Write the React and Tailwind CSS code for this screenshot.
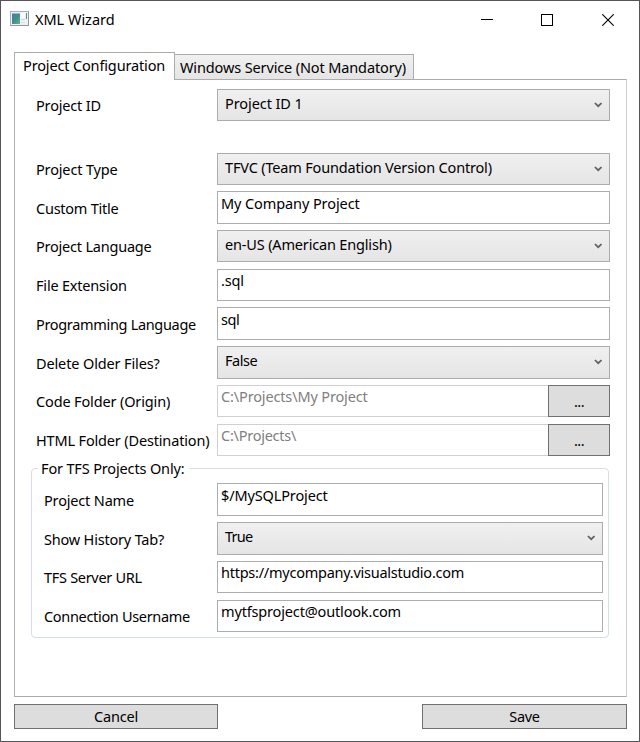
function AppIcon() {
  return (
    <svg width="19" height="15" viewBox="0 0 19 15" className="shrink-0">
      <defs>
        <linearGradient id="pane" x1="0" y1="0" x2="1" y2="1">
          <stop offset="0" stopColor="#4a78b4" />
          <stop offset="0.5" stopColor="#3f8f8c" />
          <stop offset="1" stopColor="#62b488" />
        </linearGradient>
      </defs>
      <rect x="0.5" y="0.5" width="18" height="14" fill="#eef0f3" stroke="#8f979f" />
      <path d="M0.5 14.5V0.5H18.5" fill="none" stroke="#a9b1bb" />
      <rect x="2" y="2.5" width="8" height="10.5" fill="url(#pane)" />
      <rect x="11" y="2" width="4" height="5" fill="#f8f9fa" />
      <rect x="11" y="8" width="4" height="1" fill="#d2d6da" />
      <rect x="11" y="11" width="4" height="1" fill="#dde0e4" />
      <rect x="16" y="2" width="1" height="6" fill="#4f9a86" />
    </svg>
  );
}

function Chevron() {
  return (
    <svg width="8" height="6" viewBox="0 0 8 6" className="mt-[9px] shrink-0">
      <path d="M0.9 1L4.2 4.2L7.5 1" fill="none" stroke="#606060" strokeWidth="1.7" />
    </svg>
  );
}

function Row({ height, label, tracking, offset = "pt-[6px]", labelWidth = "w-[181px]", children }) {
  return (
    <div className={`flex items-start ${height}`}>
      <div className={`shrink-0 ${labelWidth} ${offset} ${tracking}`}>{label}</div>
      {children}
    </div>
  );
}

function Combo({ height = "h-8", chevronPad = "pr-[7px]", tracking, children }) {
  return (
    <div
      className={`flex flex-1 justify-between border border-[#acacac] bg-linear-to-b from-[#f0f0f0] to-[#e5e5e5] pl-[7px] pt-[3px] ${height} ${chevronPad}`}
    >
      <span className={tracking}>{children}</span>
      <Chevron />
    </div>
  );
}

function Field({ height = "h-8", pad = "pt-0", tone = "border-[#abadb3]", tracking, children }) {
  return (
    <div className={`flex-1 border bg-white pl-[3px] ${height} ${pad} ${tone}`}>
      <div className={tracking}>{children}</div>
    </div>
  );
}

function Browse() {
  return (
    <button className="flex h-8 w-[62px] shrink-0 justify-center border border-[#707070] bg-[#dddddd] pt-[5px] tracking-[-0.6px]">
      ...
    </button>
  );
}

export default function App() {
  return (
    <div className="flex h-[742px] w-[640px] flex-col border border-[#555557] bg-white font-['Noto_Sans',sans-serif] text-[14.5px] leading-5 whitespace-nowrap text-black">
      <header className="flex h-[51px] shrink-0 items-start pl-[9px]">
        <div className="pt-[10px]">
          <AppIcon />
        </div>
        <h1 className="pt-[8px] pl-[6px] tracking-[-0.02px]">XML Wizard</h1>
        <svg width="12" height="12" viewBox="0 0 12 12" className="mt-[13px] mr-12 ml-auto">
          <path d="M0 5.5H12" stroke="#000" />
        </svg>
        <svg width="12" height="12" viewBox="0 0 12 12" className="mt-[13px] mr-[49px]">
          <rect x="0.5" y="0.5" width="11" height="11" fill="none" stroke="#000" />
        </svg>
        <svg width="12" height="12" viewBox="0 0 12 12" className="mt-[13px] mr-[25px]">
          <path d="M0.3 0.3L11.7 11.7M11.7 0.3L0.3 11.7" stroke="#000" strokeWidth="1.1" />
        </svg>
      </header>

      <nav className="z-10 ml-[13px] flex h-[28px] shrink-0 items-end">
        <div className="h-[28px] w-[161px] border border-b-0 border-[#acacac] bg-white pt-[2px] pl-[8px] tracking-[-0.146px]">
          Project Configuration
        </div>
        <div className="mb-px h-[25px] w-[239px] border border-b-0 border-l-0 border-[#acacac] bg-linear-to-b from-[#f0f0f0] to-[#e5e5e5] pt-[2px] pl-[5px] tracking-[-0.13px]">
          Windows Service (Not Mandatory)
        </div>
      </nav>

      <main className="mx-[13px] -mt-px mr-[12px] h-[618px] shrink-0 border border-[#acacac] border-r-[#d0d0d0] bg-white pt-[9px]">
        <section className="pr-[16px] pl-[21px]">
          <Row height="h-16" label="Project ID" tracking="tracking-[-0.17px]">
            <Combo tracking="tracking-[-0.08px]">Project ID 1</Combo>
          </Row>
          <Row height="h-[38px]" label="Project Type" tracking="tracking-[-0.156px]">
            <Combo tracking="tracking-[-0.17px]">TFVC (Team Foundation Version Control)</Combo>
          </Row>
          <Row height="h-[39px]" label="Custom Title" tracking="tracking-[-0.244px]" offset="pt-[7px]">
            <Field height="h-[33px]" pad="pt-px" tracking="tracking-[-0.095px]">My Company Project</Field>
          </Row>
          <Row height="h-[39px]" label="Project Language" tracking="tracking-[-0.217px]">
            <Combo tracking="tracking-[-0.168px]">en-US (American English)</Combo>
          </Row>
          <Row height="h-[38px]" label="File Extension" tracking="tracking-[-0.194px]">
            <Field tracking="tracking-[-0.2px]">.sql</Field>
          </Row>
          <Row height="h-[39px]" label="Programming Language" tracking="tracking-[-0.322px]" offset="pt-[7px]">
            <Field height="h-[33px]" pad="pt-px" tracking="tracking-[-0.43px]">sql</Field>
          </Row>
          <Row height="h-[39px]" label="Delete Older Files?" tracking="tracking-[-0.13px]" offset="pt-[7px]">
            <Combo height="h-[33px]" tracking="tracking-[-0.46px]">False</Combo>
          </Row>
          <Row height="h-[39px]" label="Code Folder (Origin)" tracking="tracking-[-0.143px]">
            <Field tone="border-[#cfd0d3] border-r-0 text-[#808080]" tracking="tracking-[-0.147px]">
              {"C:\\Projects\\My Project"}
            </Field>
            <Browse />
          </Row>
          <Row height="h-[34px]" label="HTML Folder (Destination)" tracking="tracking-[-0.16px]">
            <Field tone="border-[#cfd0d3] border-r-0 text-[#808080]" tracking="tracking-[-0.25px]">
              {"C:\\Projects\\"}
            </Field>
            <Browse />
          </Row>
        </section>

        <fieldset className="mr-[17px] ml-[16px] h-[180px] rounded-[4px] border border-[#d5dfe5] pr-[5px] pl-[12px]">
          <legend className="-ml-[6px] h-5 pr-[5px] pl-[3px] leading-5 tracking-[-0.15px]">
            For TFS Projects Only:
          </legend>
          <div className="pt-[5px]">
            <Row height="h-[39px]" labelWidth="w-[173px]" label="Project Name" tracking="tracking-[-0.167px]" offset="pt-[7px]">
              <Field height="h-[33px]" pad="pt-px" tracking="tracking-[-0.134px]">$/MySQLProject</Field>
            </Row>
            <Row height="h-[39px]" labelWidth="w-[173px]" label="Show History Tab?" tracking="tracking-[-0.195px]" offset="pt-[7px]">
              <Combo height="h-[33px]" chevronPad="pr-[7px]" tracking="tracking-[-0.76px]">True</Combo>
            </Row>
            <Row height="h-[39px]" labelWidth="w-[173px]" label="TFS Server URL" tracking="tracking-[-0.297px]">
              <Field tracking="tracking-[-0.25px]">https://mycompany.visualstudio.com</Field>
            </Row>
            <Row height="h-8" labelWidth="w-[173px]" label="Connection Username" tracking="tracking-[-0.324px]">
              <Field tracking="tracking-[-0.16px]">mytfsproject@outlook.com</Field>
            </Row>
          </div>
        </fieldset>
      </main>

      <footer className="mr-[12px] ml-[13px] flex justify-between pt-[7px]">
        <button className="flex h-[25px] w-[204px] justify-center border border-[#707070] bg-[#dddddd] pt-px tracking-[-0.179px]">
          Cancel
        </button>
        <button className="flex h-[25px] w-[205px] justify-center border border-[#707070] bg-[#dddddd] pt-px tracking-[-0.32px]">
          Save
        </button>
      </footer>
    </div>
  );
}
